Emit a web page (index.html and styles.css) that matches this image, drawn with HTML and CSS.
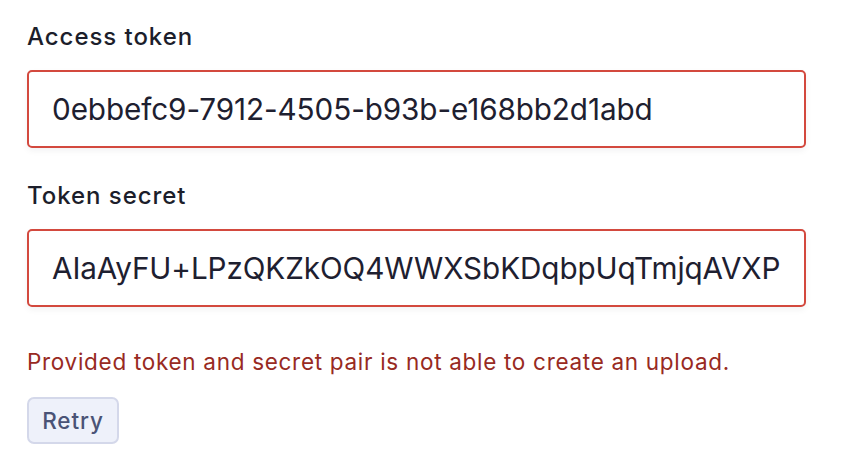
FILE: index.html
```html
<!DOCTYPE html>
<html lang="en">
<head>
<meta charset="utf-8">
<title>Upload credentials</title>
<link rel="stylesheet" href="styles.css">
</head>
<body>
<form class="form">
  <div class="field">
    <label class="label" for="token">Access token</label>
    <input class="input" id="token" type="text" value="0ebbefc9-7912-4505-b93b-e168bb2d1abd">
  </div>
  <div class="field">
    <label class="label" for="secret">Token secret</label>
    <input class="input" id="secret" type="text" value="AIaAyFU+LPzQKZkOQ4WWXSbKDqbpUqTmjqAVXPZsVxBWhqT9kzJpWq">
  </div>
  <p class="error">Provided token and secret pair is not able to create an upload.</p>
  <button class="btn" type="button">Retry</button>
</form>
</body>
</html>
```
FILE: styles.css
```css
* { box-sizing: border-box; }
html, body { margin: 0; background: #ffffff; }
body {
  font-family: Inter, "Noto Sans", sans-serif;
  padding: 19px 36px 0 27px;
}
.form { display: flex; flex-direction: column; align-items: flex-start; }
.field { display: flex; flex-direction: column; width: 779px; margin-bottom: 30px; }
.field + .field { margin-bottom: 0; }
.label {
  font-size: 24px;
  line-height: 36px;
  font-weight: 450;
  letter-spacing: 0.95px;
  color: #1c1e2b;
  margin-bottom: 15px;
}
.input {
  width: 100%;
  height: 78px;
  border: 2px solid #d3493e;
  border-radius: 5px;
  padding: 0 23px;
  font-family: Inter, "Noto Sans", sans-serif;
  font-size: 29.7px;
  letter-spacing: -0.1px;
  color: #1e2030;
  background: #fff;
  box-shadow: 0 3px 6px rgba(20, 20, 40, 0.05);
  outline: none;
}
.error {
  margin: 38px 0 17px;
  font-size: 22.5px;
  line-height: 34.5px;
  letter-spacing: 0.7px;
  color: #982a22;
}
.btn {
  width: 92px;
  height: 47px;
  padding: 0;
  font-family: Inter, "Noto Sans", sans-serif;
  font-size: 22.5px;
  font-weight: 450;
  letter-spacing: 0.9px;
  color: #4a5376;
  background: #eef1fa;
  border: 2px solid #d4d8ea;
  border-radius: 7px;
}
```
